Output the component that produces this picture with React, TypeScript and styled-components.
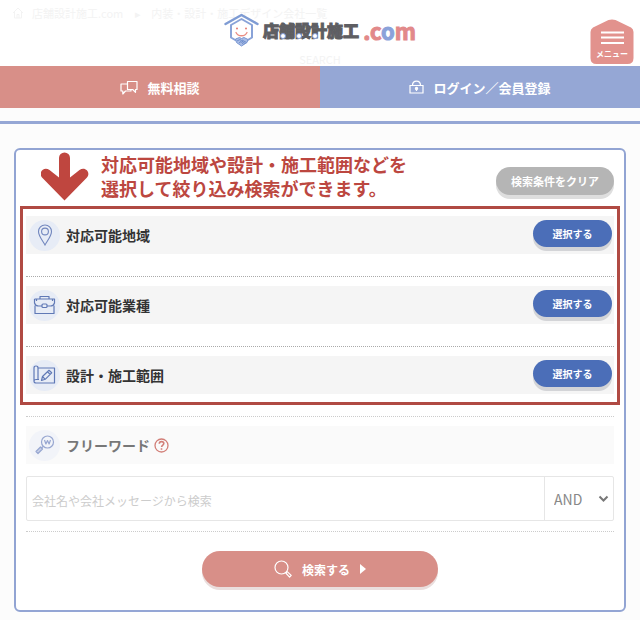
import React from "react";
import styled, { createGlobalStyle } from "styled-components";

const color = {
  red: "#d88f88",
  blue: "#95a7d5",
  navy: "#4b6eb8",
  note: "#bc4740",
};

const GlobalStyle = createGlobalStyle`
  *, *::before, *::after { box-sizing: border-box; }
  body {
    margin: 0;
    background: #fcfcfc;
    color: #333;
    font-family: "Noto Sans CJK JP", "Liberation Sans", sans-serif;
    font-size: 14px;
  }
  button, input, select { font-family: inherit; margin: 0; }
  a { color: inherit; text-decoration: none; }
`;

const Header = styled.header`
  position: relative;
  display: grid;
  grid-template-columns: 1fr auto 1fr;
  align-items: center;
  height: 66px;
  background: #fff;
`;

const Faded = styled.div`
  position: absolute;
  inset: 0;
  color: #f3f3f3;
  font-size: 11px;
  line-height: 16px;
`;

const Crumbs = styled.nav`
  display: flex;
  align-items: center;
  padding: 5px 12px 0;
`;

const Crumb = styled.a`
  margin-left: 8px;
`;

const CrumbMark = styled.span`
  margin: 0 2px 0 12px;
`;

const FadedTitle = styled.p`
  margin: 30px 0 0;
  text-align: center;
`;

const Logo = styled.a`
  position: relative;
  grid-column: 2;
  display: flex;
  align-items: center;
  gap: 4px;
  padding-bottom: 6px;
  line-height: 24px;
`;

const LogoName = styled.span`
  display: flex;
  color: #5e5e62;
  font-size: 16px;
  font-weight: 900;
  -webkit-text-stroke: 1px currentColor;
`;

const Kanji = styled.span<{ $ring?: boolean }>`
  position: relative;
  &::after {
    content: "";
    display: ${(p) => (p.$ring ? "block" : "none")};
    position: absolute;
    left: 1px;
    bottom: 3px;
    width: 6px;
    height: 6px;
    border: 1px solid #7f9bd8;
    border-radius: 50%;
    background: #fff;
  }
`;

const DotCom = styled.span`
  color: #e2898a;
  font-size: 22px;
  font-weight: 700;
  -webkit-text-stroke: 1px currentColor;
`;

const BlueLetter = styled.span`
  color: #8aa2da;
`;

const MenuButton = styled.button`
  position: relative;
  justify-self: end;
  align-self: end;
  display: grid;
  width: 44px;
  height: 46px;
  margin: 0 6px 1px 0;
  padding: 0;
  border: 0;
  background: none;
  color: #fff;
  cursor: pointer;
  svg, span { grid-area: 1 / 1; }
  span {
    align-self: end;
    font-size: 8px;
    font-weight: 700;
    line-height: 22px;
  }
`;

const Actions = styled.nav`
  display: grid;
  grid-template-columns: 1fr 1fr;
`;

const Action = styled.a<{ $tone: string }>`
  display: flex;
  align-items: center;
  justify-content: center;
  gap: 9px;
  height: 42px;
  background: ${(p) => p.$tone};
  color: #fff;
  font-size: 13px;
  font-weight: 700;
`;

const Rule = styled.hr`
  height: 3px;
  margin: 13px 0 24px;
  border: 0;
  background: ${color.blue};
`;

const Panel = styled.form`
  margin: 0 14px 8px;
  padding-bottom: 23px;
  border: 2px solid #92a4d3;
  border-radius: 6px;
  background: #fff;
`;

const Intro = styled.div`
  display: flex;
  align-items: flex-start;
  height: 56px;
  padding: 2px 10px 0 25px;
`;

const Note = styled.p`
  flex: 1;
  margin: 0 0 0 12px;
  color: ${color.note};
  font-size: 18px;
  font-weight: 700;
  line-height: 24px;
`;

const Pill = styled.button<{ $size: "clear" | "select" | "search" }>`
  display: flex;
  align-items: center;
  justify-content: center;
  border: 0;
  border-radius: 20px;
  color: #fff;
  font-weight: 700;
  cursor: pointer;
  ${(p) =>
    p.$size === "clear" &&
    `width: 118px; height: 28px; margin-top: 15px; padding: 0; background: #b5b5b5; font-size: 11px; box-shadow: 0 4px 0 #dedede;`}
  ${(p) =>
    p.$size === "select" &&
    `width: 79px; height: 27px; align-self: flex-start; margin-top: 4px; padding: 0; background: ${color.navy}; font-size: 10px; box-shadow: 0 4px 0 #d3d4d7;`}
  ${(p) =>
    p.$size === "search" &&
    `width: 236px; height: 36px; margin: 19px auto 0; padding: 0; gap: 10px; background: ${color.red}; font-size: 12px; box-shadow: 0 3px 0 #eadedd;`}
`;

const Highlight = styled.section`
  margin: 0 4px;
  padding: 7px 3px 8px;
  border: 3px solid #b04a43;
`;

const Row = styled.div`
  & + & {
    margin-top: 22px;
    padding-top: 9px;
    border-top: 1px dotted #aaa;
  }
`;

const Band = styled.div<{ $pale?: boolean }>`
  display: flex;
  align-items: center;
  height: 38px;
  padding: 0 2px 0 3px;
  background: ${(p) => (p.$pale ? "#fafafa" : "#f5f5f5")};
`;

const BandTitle = styled.h2<{ $pale?: boolean }>`
  flex: ${(p) => (p.$pale ? "none" : 1)};
  margin: 0 0 0 6px;
  color: ${(p) => (p.$pale ? "#777" : "#333")};
  font-size: 14px;
  font-weight: 700;
`;

const Badge = styled.span<{ $pale?: boolean }>`
  display: flex;
  align-items: center;
  justify-content: center;
  width: 31px;
  height: 31px;
  border-radius: 50%;
  background: ${(p) => (p.$pale ? "#f2f4f9" : "#e7ecf6")};
`;

const HelpButton = styled.button`
  display: flex;
  margin-left: 4px;
  padding: 0;
  border: 0;
  background: none;
  cursor: pointer;
`;

const FreeWord = styled.section`
  margin: 11px 10px 0;
  padding: 9px 0 10px;
  border: 1px dotted #ccc;
  border-width: 1px 0;
`;

const Fields = styled.div`
  display: flex;
  height: 45px;
  margin-top: 12px;
  border: 1px solid #e6e6e6;
  border-radius: 2px;
`;

const WordInput = styled.input`
  flex: 1;
  min-width: 0;
  padding: 4px 5px 0;
  border: 0;
  background: none;
  font-size: 12px;
  outline: none;
  &::placeholder { color: #ccc; }
`;

const SelectWrap = styled.div`
  display: grid;
  align-items: center;
  width: 69px;
  border-left: 1px solid #e6e6e6;
  select, svg { grid-area: 1 / 1; }
  svg {
    justify-self: end;
    margin-right: 4px;
    pointer-events: none;
  }
`;

const Select = styled.select`
  width: 100%;
  height: 100%;
  padding: 0 0 0 9px;
  border: 0;
  background: none;
  color: #888;
  font-size: 14px;
  appearance: none;
  outline: none;
`;

const LogoMark = () => (
  <svg width="35" height="34" viewBox="0 0 35 34" fill="none" aria-hidden="true">
    <path d="M1.500 11 17.500 2 33.500 11" stroke="#7f9cd4" strokeWidth="2.500" strokeLinecap="round" strokeLinejoin="round" />
    <path d="M12 27.500 7 24.500V12L17.500 6 28 12v12.500l-5 3" stroke="#89a3d8" strokeWidth="2" strokeLinejoin="round" />
    <circle cx="13" cy="15.500" r="1" fill="#e57b72" />
    <circle cx="22" cy="15.500" r="1" fill="#e57b72" />
    <path d="M12 19.500c2 4.300 9 4.300 11 0" stroke="#e98d83" strokeWidth="1.300" strokeLinecap="round" />
    <path d="m11.500 26 4-1.500 2 1 2.500-1 4 2-1 3-5.500 3.500-5-3.500z" fill="#a9bce5" stroke="#7897d3" strokeWidth="1" />
    <path d="m13 28 3-1.500 5 4M15 30l2-1.500 2.500 3M18 27l4.500 2.500" stroke="#6d8ecd" strokeWidth="1" />
  </svg>
);

const MenuShape = () => (
  <svg width="44" height="46" viewBox="0 0 44 46" aria-hidden="true">
    <path d="M18.500 1Q22 0 25.500 1L41 8.500Q43.500 10 43.500 13V39Q43.500 45 37.500 45H6.500Q.5 45 .5 39V13Q.5 10 3 8.500Z" fill="#e2928d" />
    <path d="M11 13.500h23M11 18.500h23M11 24h23" stroke="#fff" strokeWidth="2" />
  </svg>
);

const HomeIcon = () => (
  <svg width="12" height="12" viewBox="0 0 12 12" fill="none" stroke="#f3f3f3" aria-hidden="true">
    <path d="M1 6 6 1l5 5M2.500 5v6h7V5M5 11V7.500h2V11" />
  </svg>
);

const ChatIcon = () => (
  <svg width="18" height="15" viewBox="0 0 18 15" fill="none" stroke="#fff" strokeWidth="1.200" strokeLinejoin="round" aria-hidden="true">
    <path d="M7.500 1.500H17v8h-1.500v2.800L12.700 9.500H7.500z" />
    <path d="M7.500 4H1v7h1.800v3L5.500 11H11V9.500" />
  </svg>
);

const LockIcon = () => (
  <svg width="15" height="15" viewBox="0 0 15 15" fill="none" stroke="#fff" strokeWidth="1.200" aria-hidden="true">
    <path d="M1 5.500h13V13H1zM3.500 5.500C3.500-.4 11.500-.4 11.500 5.500" />
    <circle cx="7.500" cy="8.500" r="1.100" fill="#fff" />
    <path d="M7.500 9v2" />
  </svg>
);

const DownArrow = () => (
  <svg width="48" height="49" viewBox="0 0 48 49" aria-hidden="true">
    <path d="M18 6a5.500 5.500 0 0 1 11 0v19.500L38.500 18c6-4 12 3 7 8L23.500 48.500 1.500 26c-5-5 1-12 7-8L18 25.500Z" fill="#bf463f" />
  </svg>
);

const PinIcon = () => (
  <svg width="16" height="22" viewBox="0 0 16 22" fill="none" stroke="#7186be" strokeWidth="1.100" aria-hidden="true">
    <path d="M8 21C5.500 16.500 1.500 12 1.500 7.500a6.500 6.500 0 0 1 13 0C14.500 12 10.500 16.500 8 21Z" />
    <circle cx="8" cy="7.500" r="3.400" />
  </svg>
);

const BagIcon = () => (
  <svg width="23" height="20" viewBox="0 0 23 20" fill="none" stroke="#6079b6" strokeWidth="1.200" strokeLinejoin="round" aria-hidden="true">
    <path d="M2 10.500V18.500h19v-8M1.500 4h20v4q-1 3-4 3H14M9 11H5.500q-3 0-4-3V4M7 4V1.500h9V4M3.500 4v2M19.500 4v2" />
    <rect x="9" y="9" width="5" height="3.500" rx="1" />
  </svg>
);

const PlanIcon = () => (
  <svg width="23" height="20" viewBox="0 0 23 20" fill="none" stroke="#6079b6" strokeWidth="1.200" strokeLinejoin="round" aria-hidden="true">
    <path d="M1 16V3q0-2 2-2t2 2v11.500M5 3h16.500v15H3q-2 0-2-1.700t2-1.800h3" />
    <path d="m8.500 15.500 1-4L16 5.300l2.700 2.500-6.500 6.500ZM14.500 6.800l2.600 2.500M9.500 11.500l2.700 2.800" />
  </svg>
);

const WordIcon = () => (
  <svg width="20" height="20" viewBox="0 0 20 20" fill="none" stroke="#98a7d1" strokeWidth="1.200" strokeLinejoin="round" aria-hidden="true">
    <circle cx="12.500" cy="7" r="6" />
    <path d="m9.500 5 1.400 4 1.600-3.500L14.100 9l1.400-4M8 11.500l-2 2" />
    <path d="m5.500 12 2 2L3 18.500l-2-2z" fill="#c7d0e7" />
  </svg>
);

const HelpIcon = () => (
  <svg width="15" height="15" viewBox="0 0 15 15" fill="none" stroke="#d27f78" strokeWidth="1.300" aria-hidden="true">
    <circle cx="7.500" cy="7.500" r="6.500" />
    <path d="M5.300 5.800c0-3 4.500-2.700 4.500-.3 0 1.500-2.200 1.600-2.200 3.500M7.500 10.200v1.500" strokeWidth="1.600" />
  </svg>
);

const SearchIcon = () => (
  <svg width="18" height="18" viewBox="0 0 18 18" fill="none" stroke="#fff" strokeWidth="1.200" strokeLinejoin="round" aria-hidden="true">
    <circle cx="7.500" cy="7.500" r="6.500" />
    <path d="m11.800 13 1.400-1.400 4 3.800-1.600 1.800z" />
  </svg>
);

const PlayIcon = () => (
  <svg width="6" height="10" viewBox="0 0 6 10" fill="#fff" aria-hidden="true">
    <path d="M0 0l6 5-6 5z" />
  </svg>
);

const Chevron = () => (
  <svg width="11" height="8" viewBox="0 0 11 8" fill="none" stroke="#777" strokeWidth="2" aria-hidden="true">
    <path d="m1.500 1.500 4 4 4-4" />
  </svg>
);

const conditions = [
  { title: "対応可能地域", icon: <PinIcon /> },
  { title: "対応可能業種", icon: <BagIcon /> },
  { title: "設計・施工範囲", icon: <PlanIcon /> },
];

export default function App() {
  return (
    <>
      <GlobalStyle />
      <Header>
        <Faded>
          <Crumbs>
            <HomeIcon />
            <Crumb href="#">店舗設計施工.com</Crumb>
            <CrumbMark>▸</CrumbMark>
            <Crumb href="#">内装・設計・施工デザイン会社一覧</Crumb>
          </Crumbs>
          <FadedTitle>SEARCH</FadedTitle>
        </Faded>
        <Logo href="#">
          <LogoMark />
          <LogoName>
            {[..."店舗設計施工"].map((c) => (
              <Kanji key={c} $ring={"舗設計".includes(c)}>{c}</Kanji>
            ))}
          </LogoName>
          <DotCom>
            .c<BlueLetter>o</BlueLetter>m
          </DotCom>
        </Logo>
        <MenuButton type="button">
          <MenuShape />
          <span>メニュー</span>
        </MenuButton>
      </Header>
      <Actions>
        <Action href="#" $tone={color.red}>
          <ChatIcon />
          無料相談
        </Action>
        <Action href="#" $tone={color.blue}>
          <LockIcon />
          ログイン／会員登録
        </Action>
      </Actions>
      <main>
        <Rule />
        <Panel onSubmit={(e) => e.preventDefault()}>
          <Intro>
            <DownArrow />
            <Note>
              対応可能地域や設計・施工範囲などを
              <br />
              選択して絞り込み検索ができます。
            </Note>
            <Pill type="reset" $size="clear">検索条件をクリア</Pill>
          </Intro>
          <Highlight>
            {conditions.map(({ title, icon }) => (
              <Row key={title}>
                <Band>
                  <Badge>{icon}</Badge>
                  <BandTitle>{title}</BandTitle>
                  <Pill type="button" $size="select" aria-label={`${title}を選択する`}>選択する</Pill>
                </Band>
              </Row>
            ))}
          </Highlight>
          <FreeWord>
            <Band $pale>
              <Badge $pale><WordIcon /></Badge>
              <BandTitle $pale>
                <label htmlFor="freeword">フリーワード</label>
              </BandTitle>
              <HelpButton type="button" aria-label="ヘルプ"><HelpIcon /></HelpButton>
            </Band>
            <Fields>
              <WordInput id="freeword" type="text" placeholder="会社名や会社メッセージから検索" />
              <SelectWrap>
                <Select aria-label="検索方法" defaultValue="AND">
                  <option>AND</option>
                  <option>OR</option>
                </Select>
                <Chevron />
              </SelectWrap>
            </Fields>
          </FreeWord>
          <Pill type="submit" $size="search">
            <SearchIcon />
            検索する
            <PlayIcon />
          </Pill>
        </Panel>
      </main>
    </>
  );
}
